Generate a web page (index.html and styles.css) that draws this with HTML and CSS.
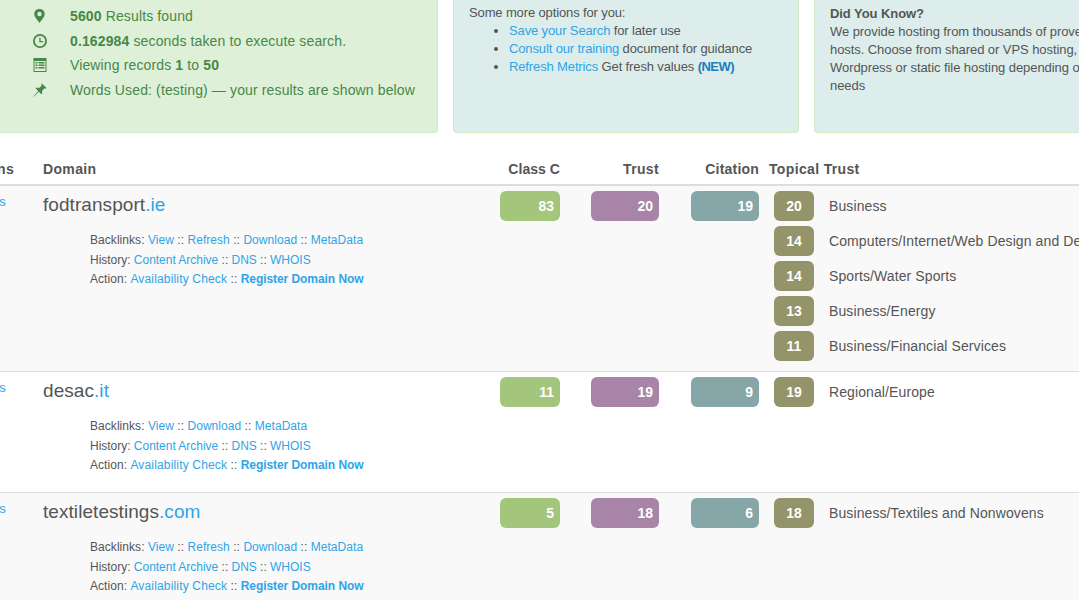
FILE: index.html
```html
<!DOCTYPE html>
<html lang="en">
<head>
<meta charset="utf-8">
<title>Search results</title>
<link rel="stylesheet" href="styles.css">
</head>
<body>
<div class="page">
  <section class="panels">
    <div class="panel panel-green">
      <ul class="stats">
        <li><svg class="ico" viewBox="0 0 14 14"><path fill-rule="evenodd" d="M6.500 0C3.200 0 1.300 2.300 1.300 5 1.300 8.200 4.900 11.400 6.500 14c1.600-2.600 5.200-5.800 5.200-9C11.700 2.300 9.800 0 6.500 0zm0 2.800a2.200 2.200 0 1 1 0 4.400 2.200 2.200 0 0 1 0-4.400z"/></svg><span><b>5600</b> Results found</span></li>
        <li><svg class="ico" viewBox="0 0 14 14"><path fill-rule="evenodd" d="M7 0a7 7 0 1 1 0 14A7 7 0 0 1 7 0zm0 1.800a5.200 5.200 0 1 0 0 10.400A5.200 5.200 0 0 0 7 1.800zM6.300 3.500h1.300v3.400h2.700v1.300h-4z"/></svg><span><b>0.162984</b> seconds taken to execute search.</span></li>
        <li><svg class="ico" viewBox="0 0 14 14"><path fill-rule="evenodd" d="M.5 0h13v14H.5zm1 3v10h11V3zM2.500 4h2v1.500h-2zm3 0h6v1.500h-6zM2.500 6.500h2V8h-2zm3 0h6V8h-6zM2.500 9h2v1.500h-2zm3 0h6v1.500h-6z"/></svg><span>Viewing records <b>1</b> to <b>50</b></span></li>
        <li><svg class="ico" viewBox="0 0 14 14"><path d="M9 .5l4.500 4.500-1 .8-1-.6L9 8l.3 2.500-1 .8-2.500-2.500-5.200 4.900-.3-.3 4.900-5.400-2.500-2.500.8-1L6 5l2.800-2.500-.6-1z"/></svg><span>Words Used: (testing) — your results are shown below</span></li>
      </ul>
    </div>
    <div class="panel panel-blue">
      <p class="panel-text">Some more options for you:</p>
      <ul class="options">
        <li><a href="#">Save your Search</a> for later use</li>
        <li><a href="#">Consult our training</a> document for guidance</li>
        <li><a href="#">Refresh Metrics</a> Get fresh values <b class="new">(NEW)</b></li>
      </ul>
    </div>
    <div class="panel panel-blue panel-know">
      <p class="panel-text"><b>Did You Know?</b><br>We provide hosting from thousands of proven web hosts. Choose from shared or VPS hosting, cloud or Wordpress or static file hosting depending on your needs</p>
    </div>
  </section>

  <section class="results">
    <div class="row head">
      <div class="head-lead">ns</div>
      <div>Domain</div>
      <div class="num c-class">Class C</div>
      <div class="num c-trust">Trust</div>
      <div class="num c-cite">Citation</div>
      <div class="topical-head">Topical Trust</div>
    </div>

    <div class="row striped tall">
      <div class="lead"><a href="#">ns</a></div>
      <div class="domain-cell">
        <div class="domain">fodtransport<a href="#">.ie</a></div>
        <div class="links">
          <div>Backlinks: <a href="#">View</a> :: <a href="#">Refresh</a> :: <a href="#">Download</a> :: <a href="#">MetaData</a></div>
          <div class="hist">History: <a href="#">Content Archive</a> :: <a href="#">DNS</a> :: <a href="#">WHOIS</a></div>
          <div>Action: <a class="avail" href="#">Availability Check</a> :: <a href="#"><b>Register Domain Now</b></a></div>
        </div>
      </div>
      <div class="c-class"><span class="pill green">83</span></div>
      <div class="c-trust"><span class="pill purple">20</span></div>
      <div class="c-cite"><span class="pill teal">19</span></div>
      <div class="topics">
        <div class="topic"><span class="tag">20</span><span class="tname">Business</span></div>
        <div class="topic"><span class="tag">14</span><span class="tname">Computers/Internet/Web Design and Development</span></div>
        <div class="topic"><span class="tag">14</span><span class="tname">Sports/Water Sports</span></div>
        <div class="topic"><span class="tag">13</span><span class="tname">Business/Energy</span></div>
        <div class="topic"><span class="tag">11</span><span class="tname">Business/Financial Services</span></div>
      </div>
    </div>

    <div class="row">
      <div class="lead"><a href="#">ns</a></div>
      <div class="domain-cell">
        <div class="domain">desac<a href="#">.it</a></div>
        <div class="links">
          <div>Backlinks: <a href="#">View</a> :: <a href="#">Download</a> :: <a href="#">MetaData</a></div>
          <div class="hist">History: <a href="#">Content Archive</a> :: <a href="#">DNS</a> :: <a href="#">WHOIS</a></div>
          <div>Action: <a class="avail" href="#">Availability Check</a> :: <a href="#"><b>Register Domain Now</b></a></div>
        </div>
      </div>
      <div class="c-class"><span class="pill green">11</span></div>
      <div class="c-trust"><span class="pill purple">19</span></div>
      <div class="c-cite"><span class="pill teal">9</span></div>
      <div class="topics">
        <div class="topic"><span class="tag">19</span><span class="tname">Regional/Europe</span></div>
      </div>
    </div>

    <div class="row striped">
      <div class="lead"><a href="#">ns</a></div>
      <div class="domain-cell">
        <div class="domain">textiletestings<a href="#">.com</a></div>
        <div class="links">
          <div>Backlinks: <a href="#">View</a> :: <a href="#">Refresh</a> :: <a href="#">Download</a> :: <a href="#">MetaData</a></div>
          <div class="hist">History: <a href="#">Content Archive</a> :: <a href="#">DNS</a> :: <a href="#">WHOIS</a></div>
          <div>Action: <a class="avail" href="#">Availability Check</a> :: <a href="#"><b>Register Domain Now</b></a></div>
        </div>
      </div>
      <div class="c-class"><span class="pill green">5</span></div>
      <div class="c-trust"><span class="pill purple">18</span></div>
      <div class="c-cite"><span class="pill teal">6</span></div>
      <div class="topics">
        <div class="topic"><span class="tag">18</span><span class="tname">Business/Textiles and Nonwovens</span></div>
      </div>
    </div>
  </section>
</div>
</body>
</html>
```

FILE: styles.css
```css
* { box-sizing: border-box; }
html, body { margin: 0; height: 600px; overflow: hidden; background: #fff; }
body { font-family: "Liberation Sans", Arial, sans-serif; font-size: 14px; color: #555; }
a { color: #2fa4e7; text-decoration: none; }
.page { width: 1079px; height: 600px; overflow: hidden; }

.panels { display: flex; gap: 15px; height: 133px; margin-left: -20px; }
.panel { flex: none; height: 133px; border: 1px solid #d6e9c6; border-top: 0; border-radius: 0 0 4px 4px; background: #dcedec; }
.panel-green { width: 458px; background: #dff0d8; color: #468847; }
.panel-blue { width: 346px; padding: 4px 15px 0; font-size: 13px; line-height: 18px; color: #555; letter-spacing: -0.13px; }
.panel-know { padding-top: 5px; letter-spacing: -0.07px; }
.panel-text { margin: 0; }

.stats { list-style: none; margin: 0; padding: 4px 0 0 52px; font-size: 14px; letter-spacing: 0.13px; }
.stats li { display: flex; align-items: center; height: 24.6px; }
.stats span { margin-left: 23px; }
.ico { width: 14px; height: 14px; fill: #468847; flex: none; }

.options { margin: 0; padding: 0 0 0 40px; }
.new { color: #217dbb; letter-spacing: -0.5px; }

.results { margin-top: 27px; }
.row { display: grid; grid-template-columns: 43px 457px 91px 100px 83px 1fr; }
.head { height: 26px; border-bottom: 2px solid #ddd; font-weight: bold; line-height: 18px; letter-spacing: 0.35px; }
.head-lead { margin-left: -3px; }
.c-class.num { width: 60px; text-align: right; letter-spacing: 0.05px; }
.c-trust.num { width: 68px; text-align: right; }
.c-cite.num { width: 68px; text-align: right; letter-spacing: 0.2px; }
.topical-head { margin-left: -5px; white-space: nowrap; }

.row:not(.head) { border-bottom: 1px solid #ddd; padding-top: 5px; height: 121px; }
.row.tall { height: 186px; }
.striped { background: #f9f9f9; }
.lead { margin-left: -8px; padding-top: 1px; font-size: 13px; line-height: 20px; }
.domain { font-size: 19px; line-height: 26px; padding-top: 1px; letter-spacing: 0.06px; }
.links { margin: 13px 0 0 47px; font-size: 12px; line-height: 19.5px; letter-spacing: 0.05px; }
.links .hist { letter-spacing: -0.02px; }
.links b { letter-spacing: -0.06px; }
.avail { letter-spacing: 0.16px; }

.pill { display: block; height: 30px; border-radius: 6px; color: #fff; font-weight: bold; line-height: 30px; text-align: right; padding-right: 6px; }
.green { width: 60px; background: #a3c57c; }
.purple { width: 68px; background: #a885a8; }
.teal { width: 68px; background: #86a6a8; }

.topics { display: flex; flex-direction: column; gap: 5px; min-width: 0; }
.topic { display: flex; align-items: center; height: 30px; white-space: nowrap; }
.tag { flex: none; width: 40px; height: 30px; border-radius: 6px; background: #94946a; color: #fff; font-weight: bold; line-height: 30px; text-align: center; }
.tname { margin-left: 15px; letter-spacing: 0.1px; }
```
